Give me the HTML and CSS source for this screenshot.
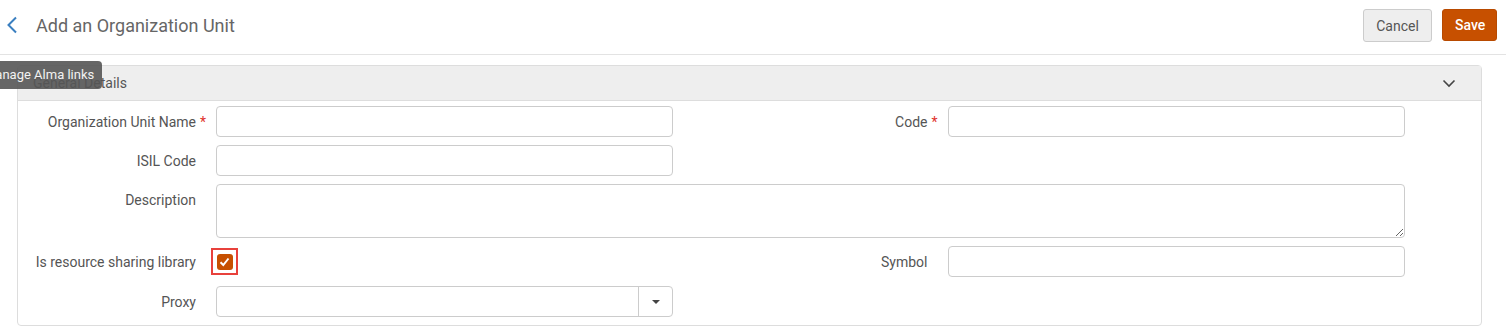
FILE: index.html
```html
<!DOCTYPE html>
<html lang="en">
<head>
    <meta charset="UTF-8">
    <title>Add an Organization Unit</title>
    <link rel="stylesheet" href="styles.css">
</head>
<body>
    <div class="page-header">
        <div class="title-wrap">
            <a class="back" href="#">
                <svg width="12" height="18" viewBox="0 0 12 18"><path d="M10 1.5 L2.5 9 L10 16.5" fill="none" stroke="#3a7fc0" stroke-width="2"/></svg>
            </a>
            <h1>Add an Organization Unit</h1>
        </div>
        <div class="actions">
            <button class="btn btn-cancel">Cancel</button>
            <button class="btn btn-save">Save</button>
        </div>
    </div>

    <div class="tooltip">Manage Alma links</div>

    <div class="panel">
        <div class="panel-header">
            <span>General Details</span>
            <svg width="14" height="10" viewBox="0 0 14 10"><path d="M1.5 2.5 L7 8 L12.5 2.5" fill="none" stroke="#444" stroke-width="1.6"/></svg>
        </div>
        <div class="panel-body">
            <div class="row">
                <div class="field">
                    <label>Organization Unit Name<span class="req">*</span></label>
                    <input type="text">
                </div>
                <div class="field">
                    <label>Code<span class="req">*</span></label>
                    <input type="text">
                </div>
            </div>
            <div class="row">
                <div class="field">
                    <label>ISIL Code<span class="req"></span></label>
                    <input type="text">
                </div>
            </div>
            <div class="row">
                <div class="field wide top">
                    <label>Description<span class="req"></span></label>
                    <textarea></textarea>
                </div>
            </div>
            <div class="row row-check">
                <div class="field">
                    <label>Is resource sharing library<span class="req"></span></label>
                    <span class="check-focus">
                        <span class="check-box">
                            <svg width="11" height="10" viewBox="0 0 11 10"><path d="M1.5 5.2 L4.3 8 L9.5 1.5" fill="none" stroke="#fff" stroke-width="2"/></svg>
                        </span>
                    </span>
                </div>
                <div class="field">
                    <label>Symbol<span class="req"></span></label>
                    <input type="text">
                </div>
            </div>
            <div class="row">
                <div class="field">
                    <label>Proxy<span class="req"></span></label>
                    <div class="select">
                        <span class="select-value"></span>
                        <span class="select-btn"><span class="caret"></span></span>
                    </div>
                </div>
            </div>
        </div>
    </div>
</body>
</html>
```

FILE: styles.css
```css
body {
    margin: 0;
    font-family: Roboto, "Liberation Sans", Arial, sans-serif;
    font-size: 14px;
    color: #555;
    background-color: #fff;
    position: relative;
}

.page-header {
    height: 54px;
    border-bottom: 1px solid #e3e3e3;
    display: flex;
    align-items: center;
    justify-content: space-between;
    padding: 0 9px 0 6px;
}

.title-wrap {
    display: flex;
    align-items: center;
    margin-top: -4px;
}

.back {
    display: flex;
    width: 30px;
}

h1 {
    margin: 0;
    font-size: 18px;
    font-weight: 400;
    color: #666;
}

.actions {
    display: flex;
    gap: 10px;
    margin-top: -3px;
}

.btn {
    font-family: inherit;
    font-size: 14px;
    height: 33px;
    border-radius: 3px;
    padding: 0 12px;
    cursor: pointer;
}

.btn-cancel {
    background-color: #eee;
    border: 1px solid #ccc;
    color: #555;
    width: 69px;
}

.btn-save {
    background-color: #c75000;
    border: 1px solid #b84a00;
    color: #fff;
    font-weight: 500;
    width: 55px;
    height: 32px;
}

.tooltip {
    position: absolute;
    left: -24px;
    top: 61px;
    height: 28px;
    line-height: 28px;
    padding: 0 8px;
    background-color: rgba(85, 85, 85, 0.9);
    color: #f2f2f2;
    font-size: 13px;
    border-radius: 4px;
    z-index: 2;
}

.panel {
    margin: 10px 24px 0 17px;
    border: 1px solid #ddd;
    border-radius: 4px;
}

.panel-header {
    height: 34px;
    background-color: #eee;
    border-bottom: 1px solid #ddd;
    display: flex;
    align-items: center;
    justify-content: space-between;
    padding: 0 25px 0 15px;
    color: #555;
}

.panel-body {
    padding: 5px 0 8px;
}

.row {
    display: flex;
    margin-bottom: 8px;
}

.row:last-child {
    margin-bottom: 0;
}

.field {
    width: 732px;
    display: flex;
    align-items: center;
}

.field.wide {
    width: 1387px;
}

.field.top {
    align-items: flex-start;
}

.field.top label {
    padding-top: 8px;
}

label {
    width: 188px;
    text-align: right;
    display: flex;
    justify-content: flex-end;
    color: #555;
    padding-right: 10px;
    box-sizing: content-box;
    flex-shrink: 0;
}

.req {
    width: 10px;
    color: #e0312b;
    text-align: right;
}

input[type="text"] {
    width: 457px;
    height: 31px;
    border: 1px solid #ccc;
    border-radius: 4px;
    box-sizing: border-box;
    font-family: inherit;
    font-size: 14px;
    padding: 0 8px;
}

textarea {
    flex: 1;
    height: 54px;
    border: 1px solid #ccc;
    border-radius: 4px;
    box-sizing: border-box;
    font-family: inherit;
    margin: 0;
    padding: 6px 8px;
}

.row-check {
    margin-top: 3px;
    margin-bottom: 9px;
}

.check-focus {
    width: 27px;
    height: 27px;
    box-sizing: border-box;
    border: 2px solid #e8413c;
    margin-left: -5px;
    display: flex;
    align-items: center;
    justify-content: center;
}

.check-box {
    width: 16px;
    height: 16px;
    background-color: #c75000;
    border-radius: 3px;
    display: flex;
    align-items: center;
    justify-content: center;
}

.select {
    width: 457px;
    height: 31px;
    border: 1px solid #ccc;
    border-radius: 4px;
    box-sizing: border-box;
    display: flex;
}

.select-value {
    flex: 1;
}

.select-btn {
    width: 33px;
    border-left: 1px solid #ccc;
    display: flex;
    align-items: center;
    justify-content: center;
}

.caret {
    width: 0;
    height: 0;
    border-left: 4px solid transparent;
    border-right: 4px solid transparent;
    border-top: 4px solid #444;
}
```
